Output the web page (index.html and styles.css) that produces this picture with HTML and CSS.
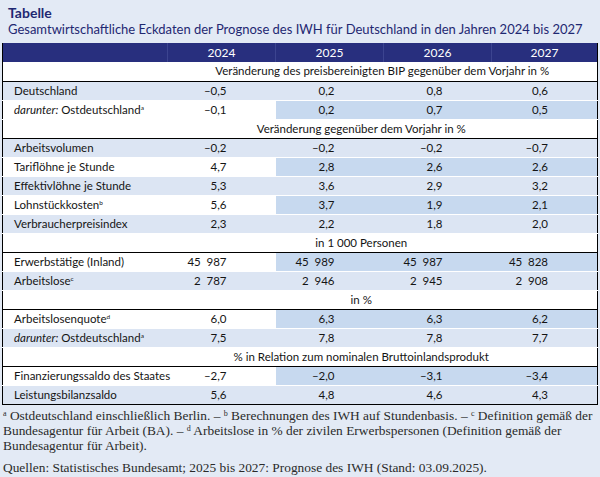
FILE: index.html
```html
<!DOCTYPE html>
<html lang="de">
<head>
<meta charset="utf-8">
<title>Tabelle</title>
<link rel="stylesheet" href="styles.css">
</head>
<body>
<div class="page">
  <div class="heading">
    <div class="kicker">Tabelle</div>
    <div class="title">Gesamtwirtschaftliche Eckdaten der Prognose des IWH für Deutschland in den Jahren 2024 bis 2027</div>
  </div>
  <table class="data">
    <colgroup>
      <col class="c-label"><col class="c-y"><col class="c-y"><col class="c-y"><col class="c-last">
    </colgroup>
    <thead>
      <tr><th></th><th>2024</th><th>2025</th><th>2026</th><th>2027</th></tr>
    </thead>
    <tbody>
      <tr class="sec"><td></td><td colspan="4" class="sec-text sec-wide">Veränderung des preisbereinigten BIP gegenüber dem Vorjahr in %</td></tr>
      <tr class="lt"><td class="lab">Deutschland</td><td class="num">–0,5</td><td class="num fc">0,2</td><td class="num fc">0,8</td><td class="num fc">0,6</td></tr>
      <tr class="wt"><td class="lab"><i>darunter:</i> Ostdeutschland<sup>a</sup></td><td class="num">–0,1</td><td class="num fc">0,2</td><td class="num fc">0,7</td><td class="num fc">0,5</td></tr>
      <tr class="sec"><td></td><td colspan="4" class="sec-text">Veränderung gegenüber dem Vorjahr in %</td></tr>
      <tr class="lt"><td class="lab">Arbeitsvolumen</td><td class="num">–0,2</td><td class="num fc">–0,2</td><td class="num fc">–0,2</td><td class="num fc">–0,7</td></tr>
      <tr class="wt"><td class="lab">Tariflöhne je Stunde</td><td class="num">4,7</td><td class="num fc">2,8</td><td class="num fc">2,6</td><td class="num fc">2,6</td></tr>
      <tr class="lt"><td class="lab">Effektivlöhne je Stunde</td><td class="num">5,3</td><td class="num fc">3,6</td><td class="num fc">2,9</td><td class="num fc">3,2</td></tr>
      <tr class="wt"><td class="lab">Lohnstückkosten<sup>b</sup></td><td class="num">5,6</td><td class="num fc">3,7</td><td class="num fc">1,9</td><td class="num fc">2,1</td></tr>
      <tr class="lt"><td class="lab">Verbraucherpreisindex</td><td class="num">2,3</td><td class="num fc">2,2</td><td class="num fc">1,8</td><td class="num fc">2,0</td></tr>
      <tr class="sec"><td></td><td colspan="4" class="sec-text">in 1 000 Personen</td></tr>
      <tr class="wt"><td class="lab">Erwerbstätige (Inland)</td><td class="num">45&ensp;987</td><td class="num fc">45&ensp;989</td><td class="num fc">45&ensp;987</td><td class="num fc">45&ensp;828</td></tr>
      <tr class="lt"><td class="lab">Arbeitslose<sup>c</sup></td><td class="num">2&ensp;787</td><td class="num fc">2&ensp;946</td><td class="num fc">2&ensp;945</td><td class="num fc">2&ensp;908</td></tr>
      <tr class="sec"><td></td><td colspan="4" class="sec-text">in %</td></tr>
      <tr class="wt"><td class="lab">Arbeitslosenquote<sup>d</sup></td><td class="num">6,0</td><td class="num fc">6,3</td><td class="num fc">6,3</td><td class="num fc">6,2</td></tr>
      <tr class="lt"><td class="lab"><i>darunter:</i> Ostdeutschland<sup>a</sup></td><td class="num">7,5</td><td class="num fc">7,8</td><td class="num fc">7,8</td><td class="num fc">7,7</td></tr>
      <tr class="sec"><td></td><td colspan="4" class="sec-text">% in Relation zum nominalen Bruttoinlandsprodukt</td></tr>
      <tr class="wt"><td class="lab">Finanzierungssaldo des Staates</td><td class="num">–2,7</td><td class="num fc">–2,0</td><td class="num fc">–3,1</td><td class="num fc">–3,4</td></tr>
      <tr class="lt last"><td class="lab">Leistungsbilanzsaldo</td><td class="num">5,6</td><td class="num fc">4,8</td><td class="num fc">4,6</td><td class="num fc">4,3</td></tr>
    </tbody>
  </table>
  <div class="notes">
    <p><sup>a</sup> Ostdeutschland einschließlich Berlin. – <sup>b</sup> Berechnungen des IWH auf Stundenbasis. – <sup>c</sup> Definition gemäß der<br>Bundesagentur für Arbeit (BA). – <sup>d</sup> Arbeitslose in % der zivilen Erwerbspersonen (Definition gemäß der<br>Bundesagentur für Arbeit).</p>
    <p class="src">Quellen: Statistisches Bundesamt; 2025 bis 2027: Prognose des IWH (Stand: 03.09.2025).</p>
  </div>
</div>
</body>
</html>
```
FILE: styles.css
```css
html, body {
  margin: 0;
  padding: 0;
  background: #e3eaf5;
}
.page {
  width: 600px;
  height: 477px;
  overflow: hidden;
  background: #e3eaf5;
  font-family: Lato, "Open Sans", sans-serif;
  color: #141414;
}
.heading {
  padding: 5px 0 0 8px;
  color: #1f2872;
  height: 38px;
  box-sizing: border-box;
}
.kicker {
  font-weight: bold;
  font-size: 14px;
  line-height: 16px;
}
.title {
  font-size: 13px;
  line-height: 17px;
  white-space: nowrap;
}
.data {
  margin: 5px 0 0 2px;
  width: 595px;
  border-collapse: collapse;
  table-layout: fixed;
  font-size: 11.5px;
  border-left: 1px solid #000;
  border-right: 1px solid #000;
}
.c-label { width: 165px; }
.c-y { width: 108px; }
.c-last { width: 106px; }
.data tr { height: 19px; }
.data th {
  background: #282f7e;
  color: #fff;
  font-weight: normal;
  font-size: 12px;
  text-align: center;
  padding: 0;
  border-left: 1px solid #3c4490;
}
.data th:first-child { border-left: none; }
.data td {
  padding: 0;
  white-space: nowrap;
  line-height: 18px;
}
.lab { padding-left: 11px !important; }
.num { text-align: right; padding-right: 49px !important; }
.lt td { background: #dce5f3; }
.wt td { background: #ffffff; }
.wt td.fc { background: #c7d9ef; }
.lt td, .wt td { border-bottom: 1px solid #ffffff; }
.sec td {
  background: #fff;
  border-top: 1px solid #000;
  border-bottom: 1px solid #000;
}
thead + tbody .sec:first-child td { border-top: none; }
.sec-text { text-align: center; padding-right: 42px !important; }
.sec-wide { padding-right: 0 !important; }
.last td { border-bottom: 1px solid #000; }
sup {
  font-size: 6.5px;
  vertical-align: 4px;
  line-height: 0;
}
.notes {
  margin-top: 3px;
  padding: 0 4px 0 3px;
  font-family: "Liberation Serif", serif;
  font-size: 13.4px;
  color: #2a2a2a;
  line-height: 15px;
  white-space: nowrap;
}
.notes p { margin: 0; }
.notes sup { font-size: 8px; vertical-align: 4px; }
.notes .src { margin-top: 7px; }
```
